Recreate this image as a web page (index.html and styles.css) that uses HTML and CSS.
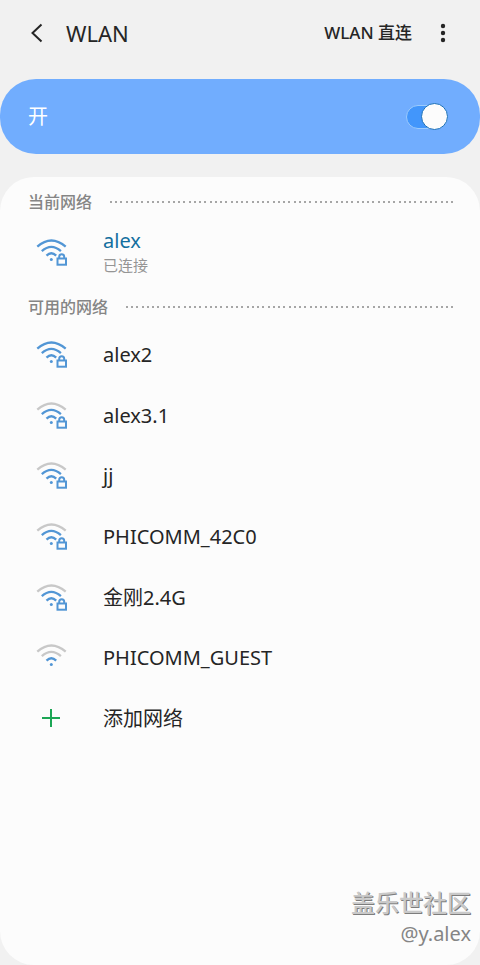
FILE: index.html
```html
<!DOCTYPE html>
<html lang="zh-CN">
<head>
<meta charset="utf-8">
<meta name="viewport" content="width=device-width, initial-scale=1">
<title>WLAN</title>
<link rel="stylesheet" href="styles.css">
</head>
<body>
<svg class="defs" aria-hidden="true">
  <symbol id="arc-outer" viewBox="0 0 32 30"><path d="M1.300 8.700Q15.300 -3.700 29.700 8.700"/></symbol>
  <symbol id="arc-middle" viewBox="0 0 32 30"><path d="M5.800 13.200Q15.300 4.600 24.900 13.200"/></symbol>
  <symbol id="arc-inner" viewBox="0 0 32 30"><path d="M10.500 17.600Q15.300 12.800 20.200 17.600"/></symbol>
  <symbol id="dot" viewBox="0 0 32 30"><circle cx="15.300" cy="21.500" r="1.500" fill="#5296d5" stroke="none"/></symbol>
  <symbol id="lock" viewBox="0 0 32 30"><rect x="21.500" y="20.500" width="8.500" height="6.200"/><path d="M23.200 20.500V18.800a2.500 2.500 0 0 1 5 0V20.500"/></symbol>
</svg>
<header class="bar">
  <button class="back" aria-label="返回"><svg width="14" height="20" viewBox="0 0 14 20"><path d="M11.500 1.500L2.500 10l9 8.500"/></svg></button>
  <h1>WLAN</h1>
  <a class="direct" href="#direct">WLAN 直连</a>
  <button class="more" aria-label="更多选项"><svg width="6" height="20" viewBox="0 0 6 20"><circle cx="3" cy="3" r="2.200"/><circle cx="3" cy="10" r="2.200"/><circle cx="3" cy="17" r="2.200"/></svg></button>
</header>
<label class="power">
  <span>开</span>
  <input class="switch" type="checkbox" role="switch" checked>
</label>
<main class="panel">
  <h2>当前网络</h2>
  <a class="current" href="#alex">
    <svg class="wifi" viewBox="0 0 32 30"><use href="#arc-outer"/><use href="#arc-middle"/><use href="#arc-inner"/><use href="#dot"/><use href="#lock"/></svg>
    <span class="names"><span class="name">alex</span><span class="state">已连接</span></span>
  </a>
  <h2>可用的网络</h2>
  <ul class="networks">
    <li><a href="#alex2"><svg class="wifi" viewBox="0 0 32 30"><use href="#arc-outer"/><use href="#arc-middle"/><use href="#arc-inner"/><use href="#dot"/><use href="#lock"/></svg>alex2</a></li>
    <li><a href="#alex3"><svg class="wifi" viewBox="0 0 32 30"><use class="off" href="#arc-outer"/><use href="#arc-middle"/><use href="#arc-inner"/><use href="#dot"/><use href="#lock"/></svg>alex3.1</a></li>
    <li><a href="#jj"><svg class="wifi" viewBox="0 0 32 30"><use class="off" href="#arc-outer"/><use href="#arc-middle"/><use href="#arc-inner"/><use href="#dot"/><use href="#lock"/></svg>jj</a></li>
    <li><a href="#phicomm"><svg class="wifi" viewBox="0 0 32 30"><use class="off" href="#arc-outer"/><use href="#arc-middle"/><use href="#arc-inner"/><use href="#dot"/><use href="#lock"/></svg>PHICOMM_42C0</a></li>
    <li><a href="#jingang"><svg class="wifi" viewBox="0 0 32 30"><use class="off" href="#arc-outer"/><use href="#arc-middle"/><use href="#arc-inner"/><use href="#dot"/><use href="#lock"/></svg>金刚2.4G</a></li>
    <li><a href="#guest"><svg class="wifi" viewBox="0 0 32 30"><use class="off" href="#arc-outer"/><use class="off" href="#arc-middle"/><use href="#arc-inner"/><use href="#dot"/></svg>PHICOMM_GUEST</a></li>
    <li><a href="#add"><svg class="wifi plus" viewBox="0 0 32 30"><path d="M15 5v18M6 14h18"/></svg>添加网络</a></li>
  </ul>
  <footer class="credit">
    <span class="community">盖乐世社区</span>
    <span class="author">@y.alex</span>
  </footer>
</main>
</body>
</html>
```
FILE: styles.css
```css
* { box-sizing: border-box; }
body {
  margin: 0;
  min-height: 100vh;
  display: flex;
  flex-direction: column;
  background: #f1f1f1;
  color: #252525;
  font-family: "Noto Sans", "Noto Sans CJK SC", sans-serif;
  font-size: 20px;
  line-height: 28px;
}
h1, h2, ul { margin: 0; padding: 0; font-weight: 400; }
ul { list-style: none; }
a { color: inherit; text-decoration: none; }
button { border: 0; padding: 0; background: none; color: inherit; display: flex; }
.defs { position: absolute; width: 0; height: 0; }

.bar {
  height: 66px;
  margin-bottom: 13px;
  padding: 0 34px 0 30px;
  display: flex;
  align-items: center;
}
.back path { fill: none; stroke: #252525; stroke-width: 2; }
.bar h1 { margin-left: 22px; font-size: 22px; }
.direct { margin-left: auto; font-size: 17px; font-weight: 500; }
.more { margin-left: 28px; fill: #252525; }

.power {
  height: 75px;
  padding: 0 32px 0 28px;
  border-radius: 36px;
  background: #71adfe;
  color: #fff;
  display: flex;
  align-items: center;
  justify-content: space-between;
}
.switch {
  appearance: none;
  margin: 0;
  width: 42px;
  height: 24px;
  border: 1px solid #9ccbfd;
  border-radius: 12px;
  background: #4296fb;
  display: flex;
  align-items: center;
  justify-content: flex-end;
}
.switch::before {
  content: "";
  flex: none;
  width: 25px;
  height: 25px;
  margin-right: -1px;
  border: 1px solid #1b70b8;
  border-radius: 50%;
  background: #fcfcfc;
}

.panel {
  flex: 1;
  margin-top: 23px;
  padding: 13px 27px 0 28px;
  border-radius: 34px;
  background: #fcfcfc;
  display: flex;
  flex-direction: column;
}
h2 {
  display: flex;
  align-items: center;
  gap: 18px;
  color: #858585;
  font-size: 16px;
  font-weight: 500;
  line-height: 24px;
}
h2::after {
  content: "";
  flex: 1;
  height: 2px;
  background: repeating-linear-gradient(to right,
    #a6a6a6 0 2px, transparent 2px 5px,
    #a6a6a6 5px 7px, transparent 7px 10px,
    #a6a6a6 10px 12px, transparent 12px 16px,
    #a6a6a6 16px 18px, transparent 18px 21px);
}
.current, .networks a { display: flex; align-items: center; }
.current { height: 77px; margin-bottom: 4px; }
.names { display: flex; flex-direction: column; }
.name { color: #136f9f; line-height: 24px; }
.state { color: #959595; font-size: 15px; line-height: 24px; }
.wifi {
  flex: none;
  width: 32px;
  height: 30px;
  margin: 0 35px 0 8px;
  fill: none;
  stroke: #5296d5;
  stroke-width: 2.300;
}
.wifi .off { stroke: #c8c8c8; }
.wifi [href="#lock"] { stroke-width: 2; }
.plus { stroke: #1ca655; stroke-width: 2; }
.networks {
  min-height: 424px;
  margin-top: 6px;
  display: grid;
  grid-auto-rows: 1fr;
}
.networks li { display: grid; }
.credit {
  margin: auto -18px 0 0;
  padding-bottom: 16px;
  display: flex;
  flex-direction: column;
  align-items: flex-end;
}
.community {
  color: #c9c9c9;
  font-size: 24px;
  font-weight: 500;
  line-height: 32px;
  text-shadow: 1px 1px 0 #7d7d7d;
}
.author { color: #858585; line-height: 30px; }
```
